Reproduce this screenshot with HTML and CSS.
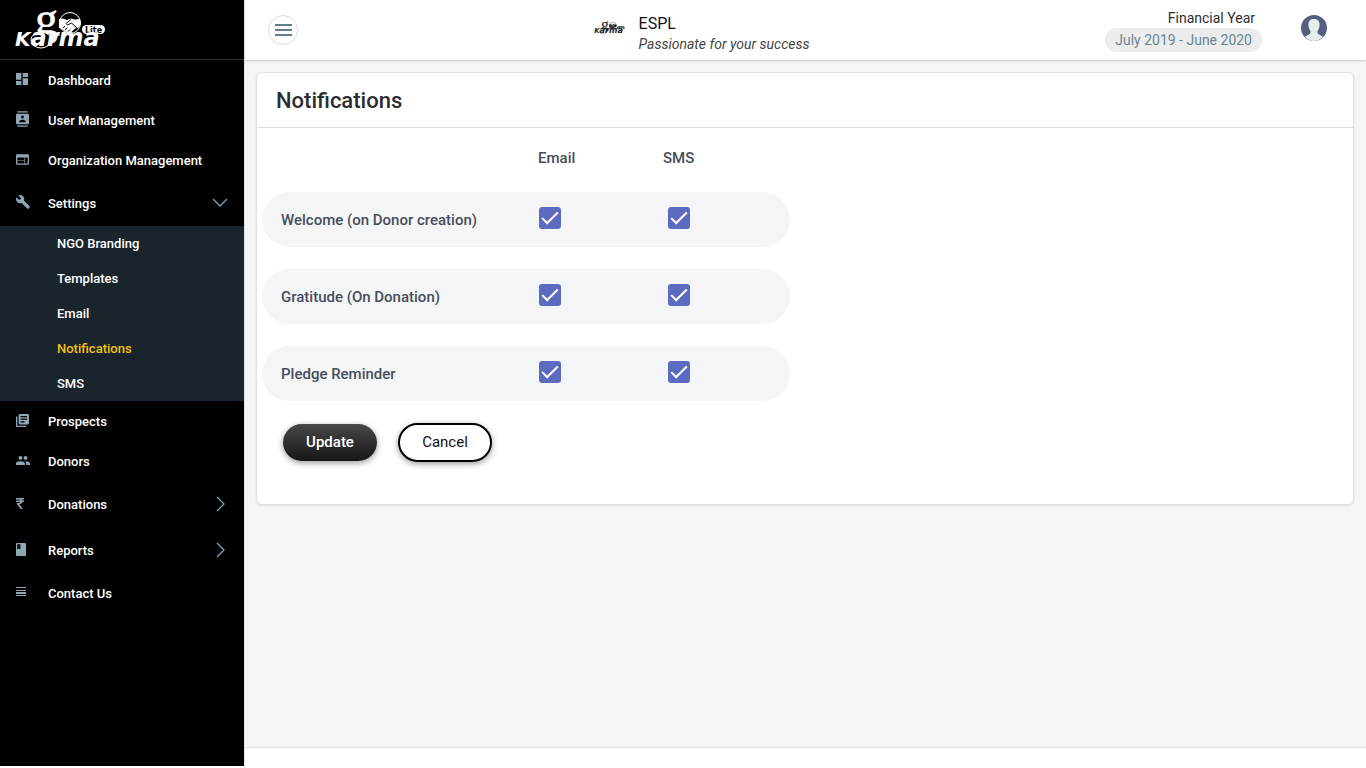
FILE: index.html
```html
<!DOCTYPE html>
<html lang="en">
<head>
<meta charset="utf-8">
<meta name="viewport" content="width=device-width, initial-scale=1">
<title>Notifications</title>
<link rel="stylesheet" href="styles.css">
</head>
<body>
<svg class="defs" aria-hidden="true">
  <symbol id="logo" class="logo" viewBox="0 0 92 38">
    <text class="logo-g" x="21" y="23">g</text>
    <circle class="logo-globe" cx="56" cy="12" r="10.500"/>
    <path d="M45 8l4-.5 4 1.500 4-1.500 4 1 5-.5 1 5-3 4-3 .5-5 5-3-.5-5-4-3-1z"/>
    <path class="logo-line" d="M57 8.500l-5 4 1.500 1.500 4-2 5.500 5M49 17l2-2M51 19l2.500-2.500M54 20.500l2-2"/>
    <rect x="68" y="14" width="23" height="9" rx="4.500"/>
    <text class="logo-lite" x="71" y="22">Lite</text>
    <ellipse class="logo-ring" cx="27" cy="29" rx="10" ry="8"/>
    <text class="logo-word" x="1" y="35"><tspan class="logo-cap">K</tspan><tspan>arma</tspan></text>
  </symbol>
</svg>
<div class="app">
  <aside class="sidebar">
    <a class="brand" href="#" aria-label="Go Karma Lite"><svg class="brand-logo"><use href="#logo"/></svg></a>
    <nav>
      <ul class="menu">
        <li><a class="item" href="#"><span class="icon"><svg width="12" height="12" viewBox="3 3 18 18"><path d="M3 13h8V3H3v10zm0 8h8v-6H3v6zm10 0h8V11h-8v10zm0-18v6h8V3h-8z"/></svg></span>Dashboard</a></li>
        <li><a class="item" href="#"><span class="icon"><svg width="13" height="16" viewBox="2 0 20 24"><path d="M20 0H4v2h16V0zM4 24h16v-2H4v2zM20 4H4c-1.100 0-2 .9-2 2v12c0 1.100.9 2 2 2h16c1.100 0 2-.9 2-2V6c0-1.100-.9-2-2-2zm-8 2.750c1.240 0 2.250 1.010 2.250 2.250s-1.010 2.250-2.250 2.250S9.750 10.240 9.750 9 10.760 6.750 12 6.750zM17 17H7v-1.500c0-1.670 3.330-2.500 5-2.500s5 .83 5 2.500V17z"/></svg></span>User Management</a></li>
        <li><a class="item" href="#"><span class="icon"><svg width="13" height="11" viewBox="2 4 20 16"><path d="M20 4H4c-1.100 0-2 .9-2 2v12c0 1.100.9 2 2 2h16c1.100 0 2-.9 2-2V6c0-1.100-.9-2-2-2zm-5 14H4v-4h11v4zm0-5H4V9h11v4zm5 5h-4V9h4v9z"/></svg></span>Organization Management</a></li>
        <li>
          <a class="item item-tall" href="#" aria-expanded="true"><span class="icon"><svg width="14" height="14" viewBox="1 1 22 22"><path d="M22.700 19l-9.100-9.100c.9-2.300.4-5-1.500-6.900-2-2-5-2.400-7.400-1.300L9 6 6 9 1.600 4.700C.4 7.100.9 10.100 2.900 12.100c1.900 1.900 4.600 2.400 6.900 1.500l9.100 9.100c.4.4 1 .4 1.400 0l2.300-2.300c.5-.4.5-1.100.1-1.400z"/></svg></span>Settings<svg class="caret" width="16" height="16" viewBox="0 0 16 16"><path d="M1 4l7 7 7-7"/></svg></a>
          <ul class="submenu">
            <li><a href="#">NGO Branding</a></li>
            <li><a href="#">Templates</a></li>
            <li><a href="#">Email</a></li>
            <li><a class="current" href="#" aria-current="page">Notifications</a></li>
            <li><a href="#">SMS</a></li>
          </ul>
        </li>
        <li><a class="item" href="#"><span class="icon"><svg width="13" height="13" viewBox="2 2 20 20"><path d="M4 6H2v14c0 1.100.9 2 2 2h14v-2H4V6zm16-4H8c-1.100 0-2 .9-2 2v12c0 1.100.9 2 2 2h12c1.100 0 2-.9 2-2V4c0-1.100-.9-2-2-2zm-1 9H9V9h10v2zm-4 4H9v-2h6v2zm4-8H9V5h10v2z"/></svg></span>Prospects</a></li>
        <li><a class="item" href="#"><span class="icon"><svg width="14" height="9" viewBox="1 5 22 14"><path d="M16 11c1.660 0 2.990-1.340 2.990-3S17.660 5 16 5s-3 1.340-3 3 1.340 3 3 3zm-8 0c1.660 0 2.990-1.340 2.990-3S9.660 5 8 5 5 6.340 5 8s1.340 3 3 3zm0 2c-2.330 0-7 1.170-7 3.500V19h14v-2.500c0-2.330-4.670-3.500-7-3.500zm8 0c-.29 0-.62.020-.97.050 1.160.84 1.970 1.970 1.970 3.450V19h6v-2.500c0-2.330-4.670-3.500-7-3.500z"/></svg></span>Donors</a></li>
        <li><a class="item item-tall" href="#" aria-expanded="false"><span class="icon"><svg width="8" height="11" viewBox="0 0 8 11"><path d="M0 0h8v1.400H5.600c.3.300.5.700.6 1.100H8v1.400H6.200C5.900 5.300 4.800 6.200 3.200 6.300L6.800 11H4.600L.8 6.100V5H2.600c1 0 1.600-.4 1.900-1.100H0V2.500h4.400C4 1.700 3.300 1.400 2.400 1.400H0z"/></svg></span>Donations<svg class="caret" width="16" height="16" viewBox="0 0 16 16"><path d="M5 1l7 7-7 7"/></svg></a></li>
        <li><a class="item item-tall" href="#" aria-expanded="false"><span class="icon"><svg width="10" height="13" viewBox="4 2 16 20" preserveAspectRatio="none"><path fill-rule="evenodd" d="M18 2H6c-1.100 0-2 .9-2 2v16c0 1.100.9 2 2 2h12c1.100 0 2-.9 2-2V4c0-1.100-.9-2-2-2zM6 4h5v8l-2.500-1.500L6 12V4z"/></svg></span>Reports<svg class="caret" width="16" height="16" viewBox="0 0 16 16"><path d="M5 1l7 7-7 7"/></svg></a></li>
        <li><a class="item" href="#"><span class="icon"><svg width="10" height="10" viewBox="0 0 10 10"><path d="M0 0h10v1H0zM0 3h10v1H0zM0 5h10v2H0zM0 8h10v1H0z"/></svg></span>Contact Us</a></li>
      </ul>
    </nav>
  </aside>
  <div class="page">
    <header class="topbar">
      <button class="toggle" type="button" aria-label="Toggle menu"><svg width="17" height="12" viewBox="0 0 17 12"><path d="M0 0h17v2H0zM0 5h17v2H0zM0 10h17v2H0z"/></svg></button>
      <div class="org">
        <svg class="org-logo" role="img" aria-label="ESPL logo"><use href="#logo"/></svg>
        <div>
          <div class="org-name">ESPL</div>
          <div class="org-tagline">Passionate for your success</div>
        </div>
      </div>
      <div class="account">
        <div class="year">
          <div class="year-label">Financial Year</div>
          <div class="year-value">July 2019 - June 2020</div>
        </div>
        <a href="#" aria-label="Profile"><svg class="avatar" viewBox="0 0 26 26"><circle cx="13" cy="13" r="13" fill="#556080"/><path fill="#e7eced" d="M13 4c-3.600 0-5.600 2-5.600 5.500 0 2.300.6 4.600 2 6.200v2c0 .7-.4 1.200-1 1.500l-4.500 2.600C6.300 24.500 9.500 26 13 26s6.700-1.500 9.100-4.200l-4.500-2.600c-.6-.3-1-.8-1-1.500v-2c1.400-1.600 2-3.900 2-6.200C18.600 6 16.600 4 13 4z"/></svg></a>
      </div>
    </header>
    <main class="content">
      <form class="card">
        <h1 class="card-title">Notifications</h1>
        <div class="card-body">
          <table class="channels">
            <thead>
              <tr><td></td><th class="email" scope="col">Email</th><th class="sms" scope="col">SMS</th></tr>
            </thead>
            <tbody>
              <tr><th scope="row">Welcome (on Donor creation)</th><td><input type="checkbox" checked aria-label="Welcome by email"></td><td class="sms-cell"><input type="checkbox" checked aria-label="Welcome by SMS"></td></tr>
              <tr><th scope="row">Gratitude (On Donation)</th><td><input type="checkbox" checked aria-label="Gratitude by email"></td><td class="sms-cell"><input type="checkbox" checked aria-label="Gratitude by SMS"></td></tr>
              <tr><th scope="row">Pledge Reminder</th><td><input type="checkbox" checked aria-label="Pledge reminder by email"></td><td class="sms-cell"><input type="checkbox" checked aria-label="Pledge reminder by SMS"></td></tr>
            </tbody>
          </table>
          <div class="actions">
            <button class="btn btn-primary" type="button">Update</button>
            <button class="btn btn-outline" type="button">Cancel</button>
          </div>
        </div>
      </form>
    </main>
    <footer class="footer"></footer>
  </div>
</div>
</body>
</html>
```
FILE: styles.css
```css
*, *::after { box-sizing: border-box; }

body {
  margin: 0;
  background: #fff;
  color: #2b2d31;
  font-family: Roboto, "Liberation Sans", sans-serif;
  font-size: 15px;
}

ul { margin: 0; padding: 0; list-style: none; }
a { color: inherit; text-decoration: none; }
svg { display: block; fill: currentColor; }
button, input { margin: 0; font: inherit; }

.defs { position: absolute; width: 0; height: 0; }
.app { display: flex; min-height: 100vh; }

/* Logo */
.logo, .brand-logo, .org-logo { overflow: visible; }
.logo-g { font: 46px "Liberation Serif", serif; stroke: currentColor; stroke-width: 0.5; }
.logo-word { font: italic bold 24px "DejaVu Sans", sans-serif; }
.logo-cap { font-size: 20px; }
.logo-lite { font: bold 8px "DejaVu Sans", sans-serif; fill: var(--logo-back); }
.logo-globe { fill: none; stroke: currentColor; stroke-width: 1px; }
.logo-line { fill: none; stroke: var(--logo-back); stroke-width: 1px; }
.logo-ring { fill: var(--logo-back); stroke: currentColor; stroke-width: 1px; }

/* Sidebar */
.sidebar {
  flex: 0 0 244px;
  margin-bottom: 2px;
  background: #000;
  color: #fff;
  font-size: 13px;
  font-weight: 500;
}
.brand {
  display: flex;
  height: 60px;
  padding: 11px 14px;
  border-bottom: 1px solid #2e2e2e;
}
.brand-logo { width: 92px; height: 38px; --logo-back: #000; }
.item {
  display: flex;
  align-items: center;
  height: 40px;
  padding: 0 16px;
}
.item-tall { height: 46px; }
.icon { width: 32px; color: #8fa6b5; padding-bottom: 2px; }
.caret {
  margin-left: auto;
  fill: none;
  stroke: #74a5bd;
  stroke-width: 1.3;
}
.submenu { background: #19242d; }
.submenu a {
  display: block;
  padding-left: 57px;
  line-height: 35px;
}
.submenu .current { color: #f4c20d; }

/* Main column */
.page {
  display: flex;
  flex: 1;
  flex-direction: column;
  min-width: 0;
  border-left: 1px solid #e2e3e5;
}
.topbar {
  display: grid;
  grid-template-columns: 1fr auto 1fr;
  align-items: center;
  height: 60px;
  padding: 0 39px 0 23px;
  background: #fff;
  box-shadow: 0 1px 2px #c9cacd;
  z-index: 1;
}
.toggle {
  display: flex;
  align-items: center;
  justify-content: center;
  width: 30px;
  height: 30px;
  padding: 0;
  border: 1px solid #dcdcdc;
  border-radius: 50%;
  background: #fff;
  color: #607d8b;
}
.org { display: flex; align-items: center; gap: 14px; margin-top: 8px; margin-right: 192px; }
.org-logo { width: 31px; height: 14px; margin-bottom: 12px; color: #222; --logo-back: #fff; }
.org-name { color: #111; font-size: 16px; line-height: 20px; }
.org-tagline { color: #444; font-size: 14px; font-style: italic; line-height: 20px; }
.account { display: flex; align-items: center; justify-content: flex-end; gap: 39px; }
.year { display: flex; flex-direction: column; align-items: flex-end; }
.year-label { padding-right: 7px; font-size: 14px; line-height: 20px; }
.year-value {
  padding: 0 10px;
  border-radius: 12px;
  background: #ececec;
  color: #698591;
  font-size: 14px;
  line-height: 24px;
}
.avatar { width: 26px; height: 26px; margin-bottom: 4px; }

.content {
  flex: 1;
  padding: 12px 12px 12px 11px;
  background: #f4f5f7;
}
.card {
  border: 1px solid #e0e1e4;
  border-radius: 6px;
  background: #fff;
  box-shadow: 0 1px 2px #dcdde0;
}
.card-title {
  margin: 0;
  padding: 2px 19px 0;
  border-bottom: 1px solid #dcdddf;
  font-size: 22px;
  font-weight: 500;
  line-height: 52px;
}
.card-body { padding: 0 5px 42px; }

.channels {
  width: 528px;
  max-width: 100%;
  border-collapse: separate;
  border-spacing: 0 22px;
  color: #464e5c;
  table-layout: fixed;
}
.channels thead th { padding-bottom: 4px; line-height: 16px; }
.channels th { padding: 0; font-weight: 500; text-align: left; }
.channels td { padding: 0; }
.channels .email { width: 125px; }
.channels .sms { width: 127px; }
.channels tbody > tr > * { height: 55px; background: #f4f5f7; }
.channels tbody th { padding-left: 19px; border-radius: 28px 0 0 28px; }
.channels tbody td { padding-left: 1px; padding-bottom: 4px; }
.channels tbody .sms-cell { padding-left: 5px; border-radius: 0 28px 28px 0; }
.channels input {
  display: flex;
  justify-content: center;
  width: 22px;
  height: 22px;
  border-radius: 3px;
  background: #5c6bc0;
  appearance: none;
}
.channels input:checked::after {
  content: "";
  width: 8px;
  height: 16px;
  margin-top: 1px;
  border: solid #fff;
  border-width: 0 2px 2px 0;
  transform: rotate(45deg);
}

.actions { display: flex; align-items: center; gap: 21px; padding-left: 21px; }
.btn {
  min-width: 94px;
  height: 39px;
  padding-bottom: 2px;
  border-radius: 20px;
  box-shadow: 0 2px 6px rgba(0, 0, 0, 0.4);
}
.btn-primary {
  height: 37px;
  border: 0;
  background: linear-gradient(#484848, #161616);
  color: #fff;
  font-weight: 500;
}
.btn-outline {
  border: 2px solid #000;
  background: #fff;
  color: #111;
}
.footer { height: 21px; border-top: 1px solid #e2e3e5; background: #fff; }
```
